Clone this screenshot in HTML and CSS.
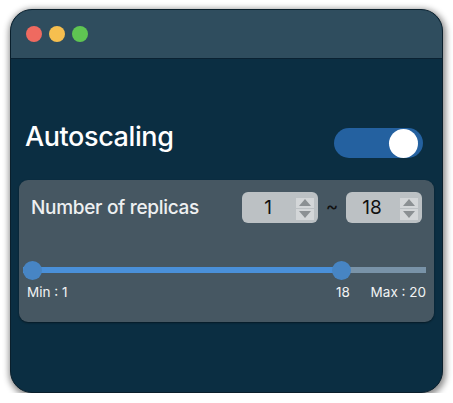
FILE: index.html
```html
<!DOCTYPE html>
<html>
<head>
<meta charset="utf-8">
<link rel="stylesheet" href="styles.css">
</head>
<body>
<div class="window">
  <div class="titlebar">
    <span class="light red"></span>
    <span class="light yellow"></span>
    <span class="light green"></span>
  </div>
  <div class="content">
    <div class="header">
      <h1 class="title">Autoscaling</h1>
      <div class="toggle"><span class="knob"></span></div>
    </div>
    <div class="panel">
      <div class="replicas">
        <span class="label">Number of replicas</span>
        <div class="range">
          <div class="spin">
            <span class="value">1</span>
            <span class="stepper"><span class="up"></span><span class="down"></span></span>
          </div>
          <span class="tilde">~</span>
          <div class="spin">
            <span class="value">18</span>
            <span class="stepper"><span class="up"></span><span class="down"></span></span>
          </div>
        </div>
      </div>
      <div class="slider">
        <div class="track"><div class="fill" style="width: 318px"></div></div>
        <span class="handle" style="left: 0px"></span>
        <span class="handle" style="left: 309px"></span>
      </div>
      <div class="ticks">
        <span class="tick-min">Min : 1</span>
        <span class="tick-cur">18</span>
        <span class="tick-max">Max : 20</span>
      </div>
    </div>
  </div>
</div>
</body>
</html>
```

FILE: styles.css
```css
* { box-sizing: border-box; }
html, body { margin: 0; padding: 0; background: #ffffff; }
body { font-family: Inter, "Noto Sans", sans-serif; }

.window {
  margin: 9px 0 0 10px;
  width: 433px;
  height: 384px;
  border: 1px solid #0a1f2c;
  border-radius: 22px;
  background: #0b2e42;
  overflow: hidden;
  box-shadow: 1px 2px 6px 2px rgba(0, 0, 0, 0.45);
  display: flex;
  flex-direction: column;
}

.titlebar {
  height: 49px;
  flex: none;
  background: #2f4d5e;
  border-bottom: 1px solid #0a2232;
  display: flex;
  align-items: center;
  gap: 7px;
  padding: 0 0 0 15px;
}
.light { width: 16px; height: 16px; border-radius: 50%; display: block; }
.red { background: #ef6a60; }
.yellow { background: #f6bf4f; }
.green { background: #5fc552; }

.content { padding: 0 8px; }

.header {
  display: flex;
  justify-content: space-between;
  align-items: flex-start;
  height: 121px;
  padding-top: 63px;
}
.title {
  margin: 0 0 0 6px;
  font-size: 27px;
  font-weight: 500;
  color: #ffffff;
  line-height: 30px;
  letter-spacing: -0.4px;
}
.toggle {
  margin-top: 6px;
  margin-right: 11px;
  width: 89px;
  height: 30px;
  border-radius: 15px;
  background: #2461a0;
  display: flex;
  align-items: center;
  justify-content: flex-end;
  padding-right: 5px;
}
.knob { width: 29px; height: 29px; border-radius: 50%; background: #ffffff; display: block; }

.panel {
  height: 142px;
  background: #465762;
  border-radius: 9px;
  box-shadow: 0 1px 2px rgba(0, 0, 0, 0.45);
  padding: 12px 8px 0 4px;
}
.replicas {
  display: flex;
  align-items: center;
  justify-content: space-between;
  height: 31px;
  padding-left: 8px;
  padding-right: 4px;
}
.label { color: #eef0f1; font-size: 19px; font-weight: 500; letter-spacing: -0.3px; }
.range { display: flex; align-items: center; gap: 0; }
.tilde { color: #111; font-size: 19px; width: 28px; text-align: center; padding-bottom: 2px; }
.spin {
  width: 76px;
  height: 31px;
  background: #bcc1c4;
  border-radius: 6px;
  display: flex;
  align-items: center;
  padding-right: 4px;
}
.value { flex: 1; text-align: center; color: #111; font-size: 19px; padding-right: 2px; }
.stepper {
  width: 18px;
  height: 22px;
  display: flex;
  flex-direction: column;
  gap: 1px;
  margin-top: 2px;
}
.up, .down {
  flex: 1;
  background: #d3d6d8;
  display: flex;
  align-items: center;
  justify-content: center;
}
.up::before {
  content: "";
  border-left: 6px solid transparent;
  border-right: 6px solid transparent;
  border-bottom: 7px solid #8b9093;
}
.down::before {
  content: "";
  border-left: 6px solid transparent;
  border-right: 6px solid transparent;
  border-top: 7px solid #8b9093;
}

.slider {
  position: relative;
  height: 18px;
  margin-top: 38px;
  display: flex;
  align-items: center;
}
.track {
  width: 100%;
  height: 6px;
  background: #7993a8;
}
.fill { height: 100%; background: #4a90d9; }
.handle {
  position: absolute;
  top: 0;
  width: 19px;
  height: 19px;
  border-radius: 50%;
  background: #4785c4;
}

.ticks {
  position: relative;
  height: 20px;
  margin-top: 5px;
  color: #f1f3f4;
  font-size: 13.5px;
  display: flex;
  justify-content: space-between;
  padding-left: 4px;
}
.tick-cur { position: absolute; left: 310px; width: 20px; text-align: center; }
```
